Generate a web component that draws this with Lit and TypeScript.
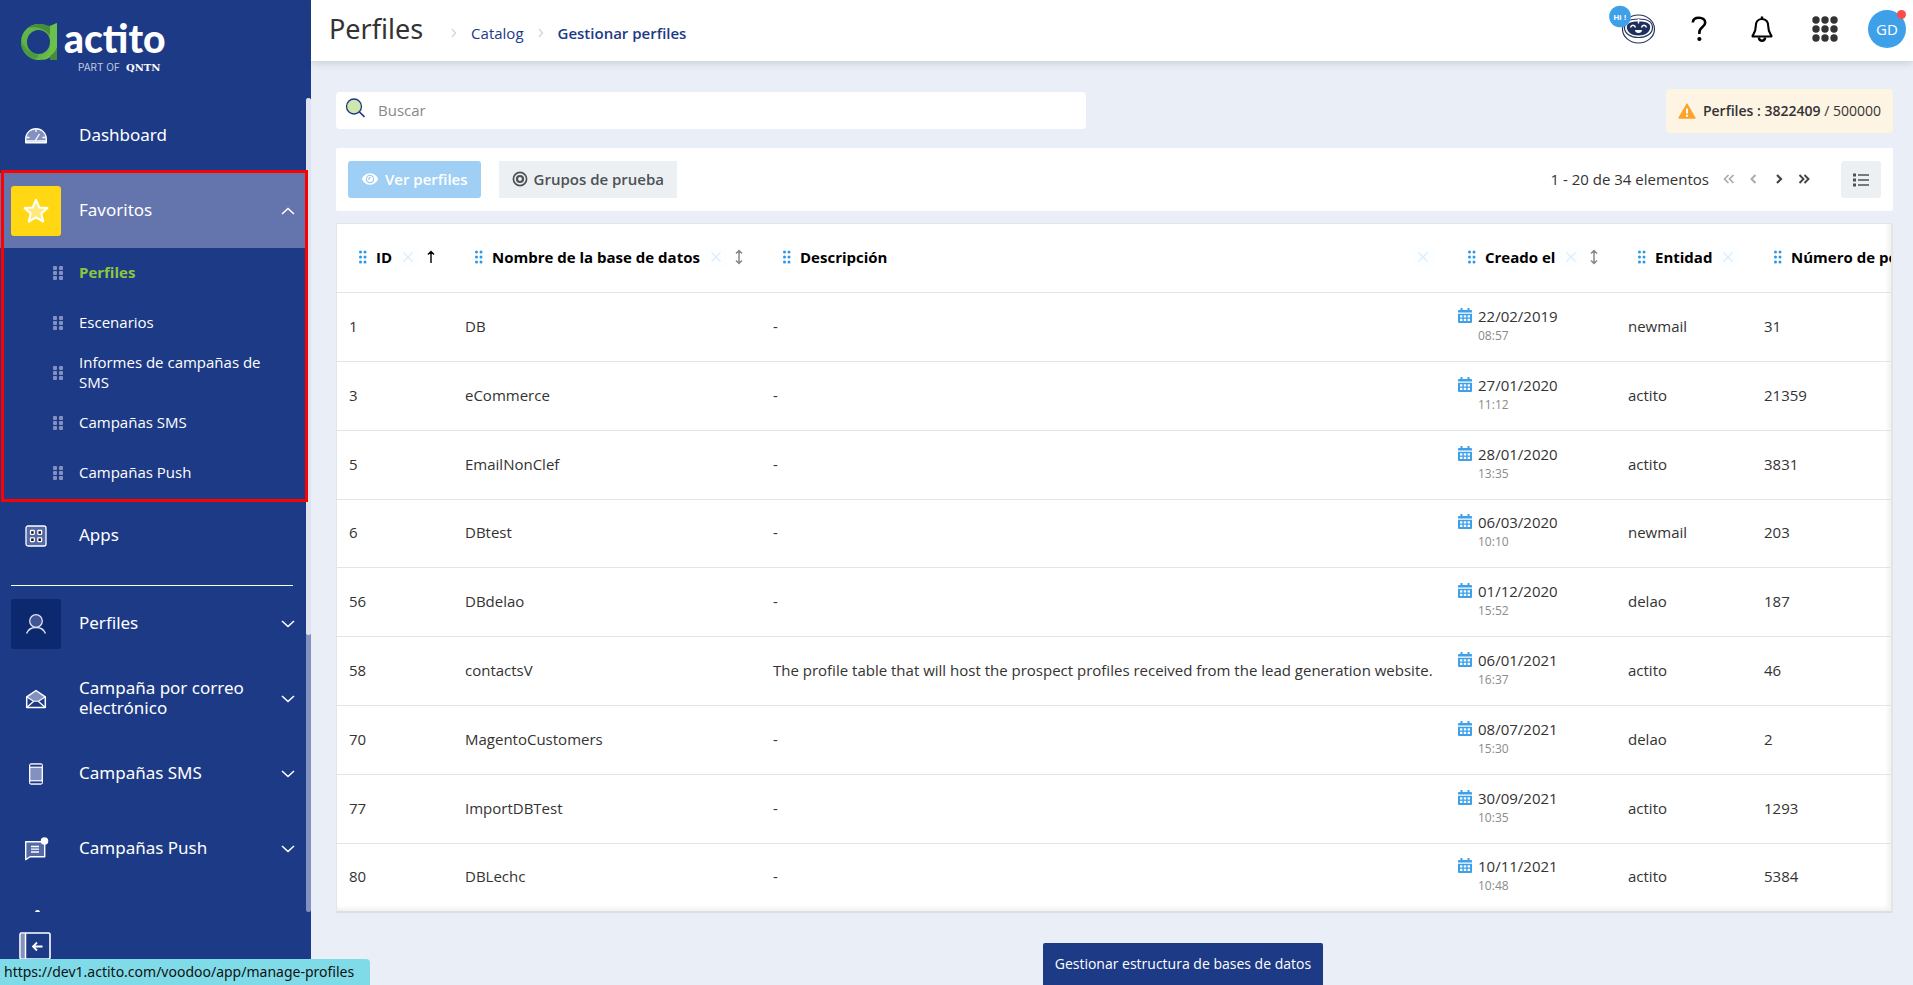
import { LitElement, html, css, svg, nothing } from "lit";
import { customElement } from "lit/decorators.js";
import { classMap } from "lit/directives/class-map.js";

interface Row {
  id: number;
  name: string;
  description: string;
  date: string;
  time: string;
  entity: string;
  count: number;
}

const rows: Row[] = [
  { id: 1, name: "DB", description: "-", date: "22/02/2019", time: "08:57", entity: "newmail", count: 31 },
  { id: 3, name: "eCommerce", description: "-", date: "27/01/2020", time: "11:12", entity: "actito", count: 21359 },
  { id: 5, name: "EmailNonClef", description: "-", date: "28/01/2020", time: "13:35", entity: "actito", count: 3831 },
  { id: 6, name: "DBtest", description: "-", date: "06/03/2020", time: "10:10", entity: "newmail", count: 203 },
  { id: 56, name: "DBdelao", description: "-", date: "01/12/2020", time: "15:52", entity: "delao", count: 187 },
  { id: 58, name: "contactsV", description: "The profile table that will host the prospect profiles received from the lead generation website.", date: "06/01/2021", time: "16:37", entity: "actito", count: 46 },
  { id: 70, name: "MagentoCustomers", description: "-", date: "08/07/2021", time: "15:30", entity: "delao", count: 2 },
  { id: 77, name: "ImportDBTest", description: "-", date: "30/09/2021", time: "10:35", entity: "actito", count: 1293 },
  { id: 80, name: "DBLechc", description: "-", date: "10/11/2021", time: "10:48", entity: "actito", count: 5384 },
];

const columns: { key: string; label: string; sort?: "asc" | "both" }[] = [
  { key: "id", label: "ID", sort: "asc" },
  { key: "name", label: "Nombre de la base de datos", sort: "both" },
  { key: "description", label: "Descripción" },
  { key: "date", label: "Creado el", sort: "both" },
  { key: "entity", label: "Entidad" },
  { key: "count", label: "Número de perfiles" },
];

const frame = (w: number, h: number, body: unknown) =>
  html`<svg width=${w} height=${h} viewBox="0 0 ${w} ${h}" fill="none" aria-hidden="true">${body}</svg>`;

const icons = {
  dashboard: frame(24, 24, svg`
    <path d="M2 19v-3.5a10 10 0 0 1 20 0V19Z" fill="#8291bf"/>
    <path d="M1.7 18.7v-3.5C1.7 9 6.500 4.700 12 4.700S22.300 9 22.300 15.200v3.500Z" stroke="#fff" stroke-width="1.400" stroke-linejoin="round"/>
    <path d="M11 17l4.500-7M12 5v3M2.500 13.500h3M18.500 13.500h3M2 17h20" stroke="#fff" stroke-width="1.300"/>`),
  star: frame(26, 26, svg`
    <path d="m13 1.800 3.300 7.600 8.200.700-6.200 5.400 1.900 8.100L13 19.300l-7.200 4.300 1.900-8.100-6.200-5.400 8.200-.700Z" fill="#ffe97a" stroke="#fff" stroke-width="2" stroke-linejoin="round"/>`),
  apps: frame(22, 22, svg`
    <rect x="1" y="1" width="20" height="20" rx="2" fill="#5469a5" stroke="#fff" stroke-width="1.300"/>
    ${[5.5, 12.800].map((x) => [5.500, 12.800].map((y) => svg`<rect x=${x} y=${y} width="3.800" height="3.800" rx=".5" fill="#111" stroke="#fff" stroke-width="1.300"/>`))}`),
  person: frame(22, 22, svg`
    <circle cx="11" cy="8" r="6.300" fill="#415595" stroke="#dfe4f0" stroke-width="1.300"/>
    <path d="M1.500 20.500c1.500-4 5.500-6 9.500-6s8 2 9.500 6" stroke="#dfe4f0" stroke-width="1.300"/>`),
  mail: frame(22, 22, svg`
    <path d="M2 8.500 11 2.500l9 6-6 4H8Z" fill="#8291bf"/>
    <path d="M1.700 8.800 11 2.500l9.300 6.300v10.700H1.700Z" stroke="#fff" stroke-width="1.500" stroke-linejoin="round"/>
    <path d="m2 9 6.500 4.200h5L20 9M2 19.300l6.500-5.800M20 19.300l-6.500-5.800" stroke="#fff" stroke-width="1.300"/>`),
  phone: frame(16, 22, svg`
    <rect x="1.700" y="1" width="12.600" height="20" rx="1.500" fill="#8291bf" stroke="#fff" stroke-width="1.300"/>
    <path d="M2.300 2.700h11.400M2.300 19.300h11.400" stroke="#1d3a86" stroke-width="1.800"/>
    <path d="M2 4.300h12M2 17.700h12" stroke="#fff" stroke-width="1"/>`),
  push: frame(26, 24, svg`
    <path d="M2.700 4.700h19v15H7l-4.300 3Z" fill="#5469a5" stroke="#fff" stroke-width="1.400" stroke-linejoin="round"/>
    <path d="M8 9.500h8M8 12.200h8M8 15h8" stroke="#fff" stroke-width="1.300"/>
    <circle cx="21.500" cy="4" r="3.800" fill="#fff"/>`),
  web: frame(26, 28, svg`
    <circle cx="13" cy="15" r="10" fill="#8291bf" stroke="#fff" stroke-width="1.500"/>
    <circle cx="14.500" cy="2.500" r="2.500" fill="#fff"/>`),
  chevron: frame(14, 8, svg`<path d="m1 1 6 5.500L13 1" stroke="#fff" stroke-width="1.600"/>`),
  grip: frame(10, 14, svg`${[0, 6].map((x) => [0, 5, 10].map((y) => svg`<rect x=${x} y=${y} width="4" height="4" rx="1" fill="#8291bf"/>`))}`),
  dots: frame(8, 14, svg`${[1.500, 6].map((x) => [2, 7, 12].map((y) => svg`<circle cx=${x} cy=${y} r="1.500" fill="#2a97e8"/>`))}`),
  collapse: frame(32, 28, svg`
    <rect x="1" y="1" width="30" height="26" rx="1.500" stroke="#fff" stroke-width="1.600"/>
    <rect x="2" y="2" width="4" height="24" fill="#8291bf"/>
    <path d="M6.500 1v26" stroke="#fff" stroke-width="1.500"/>
    <path d="M23.500 14.500h-9.500M18 10.500l-4 4 4 4" stroke="#fff" stroke-width="1.800"/>`),
  search: frame(20, 20, svg`
    <circle cx="9" cy="8.500" r="7.500" fill="#cfe6ae" stroke="#1d3a86" stroke-width="1.300"/>
    <path d="m14 13.500 5.500 5.500" stroke="#1d3a86" stroke-width="1.700"/>`),
  eye: frame(18, 14, svg`
    <path d="M.800 7C2.500 3.300 5.400 1.200 9 1.200S15.500 3.300 17.200 7C15.500 10.700 12.600 12.800 9 12.800S2.500 10.700.800 7Z" fill="#fff"/>
    <circle cx="9" cy="7" r="3.600" stroke="#9fcff4" stroke-width="1.300"/>
    <path d="M9 5a2 2 0 0 1-2 2" stroke="#9fcff4" stroke-width="1.500"/>`),
  target: frame(16, 16, svg`
    <circle cx="8" cy="8" r="6.600" stroke="#4c5257" stroke-width="1.700"/>
    <circle cx="8" cy="8" r="3" stroke="#4c5257" stroke-width="2.200"/>`),
  warning: frame(18, 16, svg`
    <path d="M9 1.300 16.800 15H1.200Z" fill="#fca32c" stroke="#fca32c" stroke-width="1.600" stroke-linejoin="round"/>
    <path d="M9 5.500v5M9 11.800v2" stroke="#fff" stroke-width="2"/>`),
  list: frame(16, 14, svg`
    <path d="M0 2h3M0 7h3M0 12h3" stroke="#4c5257" stroke-width="3"/>
    <path d="M5 2h11M5 7h11M5 12h11" stroke="#4c5257" stroke-width="1.700"/>`),
  calendar: frame(14, 16, svg`
    <path d="M2.500 0h2v2h5V0h2v2H13a1 1 0 0 1 1 1v1.500H0V3a1 1 0 0 1 1-1h1.500ZM0 5.800h14V14a1 1 0 0 1-1 1H1a1 1 0 0 1-1-1Z" fill="#3fa0ea"/>
    ${[2, 5.800, 9.600].map((x) => [7.300, 10.800].map((y) => svg`<rect x=${x} y=${y} width="2.400" height="2.200" fill="#fff"/>`))}`),
  close: frame(12, 12, svg`<path d="m1.500 1.500 9 9M10.500 1.500l-9 9" stroke="#dcedfb" stroke-width="1.300"/>`),
  asc: frame(8, 14, svg`<path d="M4 13V1.500M1 4.500l3-3 3 3" stroke="#000" stroke-width="1.400"/>`),
  both: frame(8, 16, svg`<path d="M4 1.500v13M1 4.500l3-3 3 3M1 11.500l3 3 3-3" stroke="#888" stroke-width="1.500"/>`),
  bot: frame(56, 48, svg`
    <ellipse cx="30.500" cy="24" rx="16" ry="14" fill="#fff" stroke="#26355c" stroke-width="1.200"/>
    <path d="M16.500 22.500c0-5.500 4.500-8.500 14-8.500s14 3 14 8.500c0 6-6 10-14 10s-14-4-14-10Z" stroke="#26355c" stroke-width="1.200"/>
    <path d="M18.800 22c0-3.700 3.700-5.500 11.700-5.500s11.700 1.800 11.700 5.500c0 5-5 8.500-11.700 8.500S18.800 27 18.800 22Z" fill="#1e2f5c"/>
    <path d="M22.500 22.500c.800-3 4.200-3 5 0M33.500 22.500c.800-3 4.200-3 5 0M30.500 14v4.500" stroke="#fff" stroke-width="1.400"/>
    <path d="M27 25h7c0 2-1.500 3-3.500 3S27 27 27 25Z" fill="#fff"/>
    <circle cx="12" cy="11.500" r="10.800" fill="#3fa0ea"/>
    <text x="12" y="14.500" text-anchor="middle" font-size="8" font-weight="600" fill="#fff">Hi !</text>`),
  help: frame(16, 26, svg`
    <path d="M1.800 6.500C2 3.500 4.500 1.800 8 1.800s6.200 1.800 6.200 5c0 4.200-5.800 4.200-5.800 9.200v2" stroke="#000" stroke-width="2.600"/>
    <circle cx="8.400" cy="23" r="2.100" fill="#000"/>`),
  bell: frame(22, 26, svg`
    <path d="M11 3c-4.500 0-6.200 3.500-6.200 7 0 5.500-1.300 6.800-3.200 9.700v.8h18.800v-.8c-1.900-2.900-3.200-4.200-3.200-9.700 0-3.500-1.700-7-6.200-7Z" stroke="#000" stroke-width="2.100" stroke-linejoin="round"/>
    <path d="M11 .500V3M7.800 21.500c.400 2.300 1.500 3.300 3.200 3.300s2.800-1 3.200-3.300" stroke="#000" stroke-width="2.400"/>`),
  grid: frame(26, 26, svg`${[4, 13, 22].map((x) => [4, 13, 22].map((y) => svg`<circle cx=${x} cy=${y} r="3.700" fill="#333"/>`))}`),
  crumb: frame(6, 10, svg`<path d="m1 1 3.500 4L1 9" stroke="#d5d8dc" stroke-width="1.500"/>`),
  first: frame(12, 10, svg`<path d="M5.500 1 1.500 5l4 4M10.500 1l-4 4 4 4" stroke="#a9abad" stroke-width="1.700"/>`),
  prev: frame(8, 10, svg`<path d="M5.500 1 1.500 5l4 4" stroke="#a9abad" stroke-width="2"/>`),
  next: frame(8, 10, svg`<path d="m2 1 4 4-4 4" stroke="#444" stroke-width="2.200"/>`),
  last: frame(12, 10, svg`<path d="m1.500 1 4 4-4 4M6.500 1l4 4-4 4" stroke="#444" stroke-width="1.900"/>`),
};

@customElement("actito-logo")
class ActitoLogo extends LitElement {
  static styles = css`
    :host { display: block; }
    svg { display: block; overflow: visible; }
    .word { font: 900 39px Lato, sans-serif; fill: #fff; }
    .small { font: 400 10px Inter, sans-serif; fill: #c3cbe0; }
    .brand { font: 700 10px "DejaVu Serif", serif; fill: #fff; }
  `;
  render() {
    return html`<svg width="150" height="54" viewBox="0 0 150 54" role="img" aria-label="actito, part of QNTN">
      <defs>
        <linearGradient id="ring" x1="0" y1="0" x2="1" y2="1">
          <stop offset="0" stop-color="#6abf4b" /><stop offset=".5" stop-color="#57a843" /><stop offset="1" stop-color="#74c651" />
        </linearGradient>
        <linearGradient id="dot" gradientUnits="userSpaceOnUse" x1="0" y1="0" x2="0" y2="16">
          <stop offset=".5" stop-color="#6cc04c" /><stop offset=".5" stop-color="#fff" />
        </linearGradient>
      </defs>
      <path d="M29 3 36 0v37h-7Z" fill="#4b9a3f" />
      <path fill-rule="evenodd" fill="url(#ring)" d="M18 1a18 18 0 1 0 0 36 18 18 0 0 0 0-36Zm-.5 6a11.500 12 0 1 1 0 24 11.500 12 0 0 1 0-24Z" />
      <path d="M7 5C13 0 20 0 29 3l7-3v4l-7 8C24 5 14 3 7 5Z" fill="#468c3c" />
      <path d="M36 0v25c-2 7-8 11-14 12 5-4 7-8 7-14V3Z" fill="#6cc04c" />
      <path d="M36 24v13h-7v-4c3-2 6-5 7-9Z" fill="#468c3c" />
      <path d="M0 17C3 26 9 30 18 32c-2 3-4 4-5 4C5 34 0 27 0 17Z" fill="#4b9a3f" />
      <text class="word" x="43" y="30">act<tspan fill="url(#dot)">i</tspan>to</text>
      <text class="small" x="57" y="48">PART OF</text>
      <text class="brand" x="105" y="48">QNTN</text>
    </svg>`;
  }
}

@customElement("side-bar")
class SideBar extends LitElement {
  static styles = css`
    :host { display: flex; flex-direction: column; background: #1d3a86; color: #fff; min-height: 0; }
    * { box-sizing: border-box; }
    svg { display: block; flex: none; }
    ul { list-style: none; margin: 0; padding: 0; }
    a { color: inherit; text-decoration: none; }
    .logo { height: 98px; flex: none; padding: 23px 21px 0; }
    .scroller { position: relative; flex: 1; min-height: 0; overflow: hidden; }
    .track { position: absolute; top: 0; right: 0; bottom: 0; width: 5px; background: #8291bf; border-radius: 3px; }
    .thumb { height: 66%; background: #dfe3ef; border-radius: 3px; }
    .menu { padding-right: 5px; }
    .item { display: flex; align-items: center; width: 100%; height: 75px; padding: 0 11px; gap: 18px; border: 0; background: none; color: inherit; font: 400 17px/20px "Noto Sans", "Open Sans", sans-serif; text-align: left; }
    .tile { display: flex; align-items: center; justify-content: center; width: 50px; height: 50px; flex: none; border-radius: 3px; }
    .tile.star { background: #ffd813; }
    .tile.dark { background: #0c286f; }
    .label { flex: 1; padding-bottom: 2px; }
    .open { background: #6474ad; }
    .open .chevron { transform: rotate(180deg); }
    .favorites { position: relative; }
    .favorites::after { content: ""; position: absolute; inset: -3px -2px -4px 1px; border: 3px solid #f00; pointer-events: none; z-index: 1; }
    .sub { display: flex; align-items: center; height: 50px; gap: 16px; padding: 0 30px 0 53px; font: 400 15px/20px "Open Sans", "Noto Sans", sans-serif; }
    .sub span { padding-bottom: 2px; }
    .sub.current { color: #8bc63f; font-weight: 700; }
    .divider { height: 1px; margin: 12px 13px 0 11px; border: 0; background: #fff; }
    .foot { flex: none; height: 73px; padding: 20px 19px; }
    .collapse { display: block; padding: 0; border: 0; background: none; }
  `;

  private item(icon: unknown, label: string, tile = "", expand = true) {
    return html`<li><button class="item">
      <span class="tile ${tile}">${icon}</span><span class="label">${label}</span>
      ${expand ? icons.chevron : nothing}
    </button></li>`;
  }

  render() {
    const favorites = ["Perfiles", "Escenarios", "Informes de campañas de SMS", "Campañas SMS", "Campañas Push"];
    return html`
      <div class="logo"><actito-logo></actito-logo></div>
      <nav class="scroller">
        <div class="track"><div class="thumb"></div></div>
        <ul class="menu">
          ${this.item(icons.dashboard, "Dashboard", "", false)}
          <li class="favorites">
            <button class="item open" aria-expanded="true">
              <span class="tile star">${icons.star}</span><span class="label">Favoritos</span>
              <span class="chevron">${icons.chevron}</span>
            </button>
            <ul>
              ${favorites.map((f, i) => html`<li>
                <a href="#" class=${classMap({ sub: true, current: i === 0 })}>${icons.grip}<span>${f}</span></a>
              </li>`)}
            </ul>
          </li>
          ${this.item(icons.apps, "Apps", "", false)}
          <li><hr class="divider" /></li>
          ${this.item(icons.person, "Perfiles", "dark")}
          ${this.item(icons.mail, "Campaña por correo electrónico")}
          ${this.item(icons.phone, "Campañas SMS")}
          ${this.item(icons.push, "Campañas Push")}
          <li><div class="item"><span class="tile">${icons.web}</span></div></li>
        </ul>
      </nav>
      <div class="foot"><button class="collapse" aria-label="Contraer menú">${icons.collapse}</button></div>
    `;
  }
}

@customElement("top-bar")
class TopBar extends LitElement {
  static styles = css`
    :host { box-sizing: border-box; display: flex; align-items: center; justify-content: space-between; height: 61px; flex: none; background: #fff; padding: 0 7px 3px 18px; box-shadow: 0 2px 8px rgba(60, 70, 80, 0.2); z-index: 1; }
    svg { display: block; }
    h1 { margin: 0 28px 0 0; font: 400 27px/36px "Noto Sans", "Open Sans", sans-serif; color: #333; }
    .left { display: flex; align-items: center; }
    .crumbs { display: flex; align-items: center; gap: 14px; padding-top: 8px; font-size: 15px; line-height: 20px; }
    .crumbs a { color: #1d3a86; text-decoration: none; }
    .crumbs .here { font-weight: 600; }
    .tools { display: flex; align-items: center; }
    button { display: flex; align-items: center; justify-content: center; width: 63px; height: 40px; padding: 0; border: 0; background: none; }
    .user { position: relative; width: 38px; height: 38px; margin-left: 12px; border-radius: 50%; background: #3fa0ea; color: #fff; font: 400 15px/20px "Open Sans", sans-serif; }
    .dot { position: absolute; top: 0; right: 0; width: 9px; height: 9px; border-radius: 50%; background: #ff4a4a; }
  `;
  render() {
    return html`
      <div class="left">
        <h1>Perfiles</h1>
        <nav class="crumbs">${icons.crumb}<a href="#">Catalog</a>${icons.crumb}<a class="here" href="#">Gestionar perfiles</a></nav>
      </div>
      <div class="tools">
        <button aria-label="Asistente">${icons.bot}</button>
        <button aria-label="Ayuda">${icons.help}</button>
        <button aria-label="Notificaciones">${icons.bell}</button>
        <button aria-label="Aplicaciones">${icons.grid}</button>
        <button class="user">GD<span class="dot"></span></button>
      </div>
    `;
  }
}

@customElement("profile-table")
class ProfileTable extends LitElement {
  static styles = css`
    :host { display: block; box-sizing: border-box; background: #fff; border: 1px solid #e3e6e8; border-bottom: 2px solid #dcdfe0; border-right: 2px solid #e4e6e6; overflow: hidden; box-shadow: inset -3px -3px 4px rgba(0, 0, 0, 0.06); }
    * { box-sizing: border-box; }
    svg { display: block; flex: none; }
    table { width: calc(100% + 81px); height: 100%; border-collapse: separate; border-spacing: 0; table-layout: fixed; color: #333; font-size: 15px; line-height: 20px; }
    th, td { padding: 0 12px 2px; text-align: left; vertical-align: middle; font-weight: 400; white-space: nowrap; border-bottom: 1px solid #e3e4e5; }
    th { height: 69px; }
    tr:last-child td { border-bottom: 0; }
    .id { width: 116px; }
    .name { width: 308px; }
    .date { width: 170px; }
    .entity { width: 136px; }
    .count { width: 220px; }
    .head { display: flex; align-items: center; padding-left: 10px; color: #000; font-weight: 700; }
    .head .text { margin-left: 9px; }
    .head .grow { flex: 1; }
    .remove { display: flex; align-items: center; justify-content: center; width: 22px; height: 22px; margin-left: 5px; padding: 0; border: 0; border-radius: 3px; background: #fcfeff; }
    .sort { margin-left: 8px; padding: 0; border: 0; background: none; }
    .when { display: grid; grid-template-columns: 14px 1fr; column-gap: 6px; align-items: center; }
    .when .time { grid-column: 2; font-size: 12px; color: #8a8a8a; }
  `;
  render() {
    return html`<table>
      <thead><tr>${columns.map((c) => html`<th class=${c.key} scope="col"><div class="head">
        ${icons.dots}<span class="text ${c.key === "description" ? "grow" : ""}">${c.label}</span>
        <button class="remove" aria-label="Quitar ${c.label}">${icons.close}</button>
        ${c.sort ? html`<button class="sort" aria-label="Ordenar por ${c.label}">${icons[c.sort]}</button>` : nothing}
      </div></th>`)}</tr></thead>
      <tbody>${rows.map((r) => html`<tr>
        <td>${r.id}</td><td>${r.name}</td><td>${r.description}</td>
        <td><div class="when">${icons.calendar}<span>${r.date}</span><span class="time">${r.time}</span></div></td>
        <td>${r.entity}</td><td>${r.count}</td>
      </tr>`)}</tbody>
    </table>`;
  }
}

@customElement("app-root")
class AppRoot extends LitElement {
  static styles = css`
    :host { display: grid; grid-template-columns: 311px minmax(0, 1fr); grid-template-rows: minmax(0, 1fr); height: 100vh; min-height: 700px; position: relative; overflow: hidden; background: #eaeff7; color: #333; font-family: "Open Sans", "Noto Sans", sans-serif; font-size: 15px; line-height: 20px; }
    * { box-sizing: border-box; }
    svg { display: block; flex: none; }
    button { font: inherit; color: inherit; }
    .page { display: flex; flex-direction: column; min-width: 0; min-height: 0; }
    .content { flex: 1; min-height: 0; display: flex; flex-direction: column; padding: 28px 20px 0 25px; }
    .top { display: flex; align-items: center; justify-content: space-between; height: 44px; }
    .search { display: flex; align-items: flex-start; gap: 13px; width: 750px; height: 37px; padding: 6px 9px; margin-bottom: 1px; background: #fff; border-radius: 4px; }
    .search input { flex: 1; height: 24px; padding: 0; border: 0; outline: 0; background: none; font: inherit; color: #333; }
    .search input::placeholder { color: #888; opacity: 1; }
    .quota { display: flex; align-items: center; gap: 7px; height: 44px; padding: 0 12px; border-radius: 4px; background: #fdf4e4; font-size: 14px; }
    .quota b { font-weight: 600; }
    .bar { display: flex; align-items: center; height: 63px; margin-top: 15px; padding: 0 12px; background: #fff; border-radius: 2px; }
    .btn { display: flex; align-items: center; gap: 6px; height: 37px; padding: 0 12px 2px; border: 0; border-radius: 3px; font-weight: 600; }
    .view { background: #9fcff4; color: #fff; margin-right: 19px; }
    .test { background: #edf0f2; color: #4c5257; border-radius: 0; }
    .pager { display: flex; align-items: center; margin-left: auto; padding-bottom: 2px; }
    .range { margin-right: 7px; }
    .step { display: flex; align-items: center; justify-content: center; width: 25px; height: 24px; padding: 0; border: 0; background: none; }
    .columns { display: flex; align-items: center; justify-content: center; width: 40px; height: 37px; margin-left: 25px; padding: 0; border: 0; border-radius: 3px; background: #edf0f2; }
    profile-table { flex: 1; min-height: 0; margin-top: 12px; }
    .footer { display: flex; margin-top: 30px; }
    .footer .before { flex: 31; }
    .footer .after { flex: 25; }
    .manage { height: 42px; padding: 0 12px; border: 0; border-radius: 2px 2px 0 0; background: #1d3a86; color: #fff; font-size: 14px; }
    .status { position: absolute; left: 0; bottom: 0; height: 26px; padding: 3px 16px 3px 4px; border-radius: 0 4px 0 0; background: #80dbe8; color: #111; font: 400 14px/20px "Noto Sans", "Open Sans", sans-serif; z-index: 2; }
    .btn { padding: 0 13px 2px; }
    .view { margin-right: 18px; }
  `;
  render() {
    return html`
      <side-bar></side-bar>
      <div class="page">
        <top-bar></top-bar>
        <main class="content">
          <div class="top">
            <label class="search">${icons.search}<input type="search" placeholder="Buscar" aria-label="Buscar" /></label>
            <div class="quota">${icons.warning}<span><b>Perfiles : 3822409</b> / 500000</span></div>
          </div>
          <div class="bar">
            <button class="btn view">${icons.eye}Ver perfiles</button>
            <button class="btn test">${icons.target}Grupos de prueba</button>
            <div class="pager">
              <span class="range">1 - 20 de 34 elementos</span>
              <button class="step" aria-label="Primera">${icons.first}</button>
              <button class="step" aria-label="Anterior">${icons.prev}</button>
              <button class="step" aria-label="Siguiente">${icons.next}</button>
              <button class="step" aria-label="Última">${icons.last}</button>
            </div>
            <button class="columns" aria-label="Columnas">${icons.list}</button>
          </div>
          <profile-table></profile-table>
          <div class="footer"><span class="before"></span><button class="manage">Gestionar estructura de bases de datos</button><span class="after"></span></div>
        </main>
      </div>
      <div class="status">https://dev1.actito.com/voodoo/app/manage-profiles</div>
    `;
  }
}
